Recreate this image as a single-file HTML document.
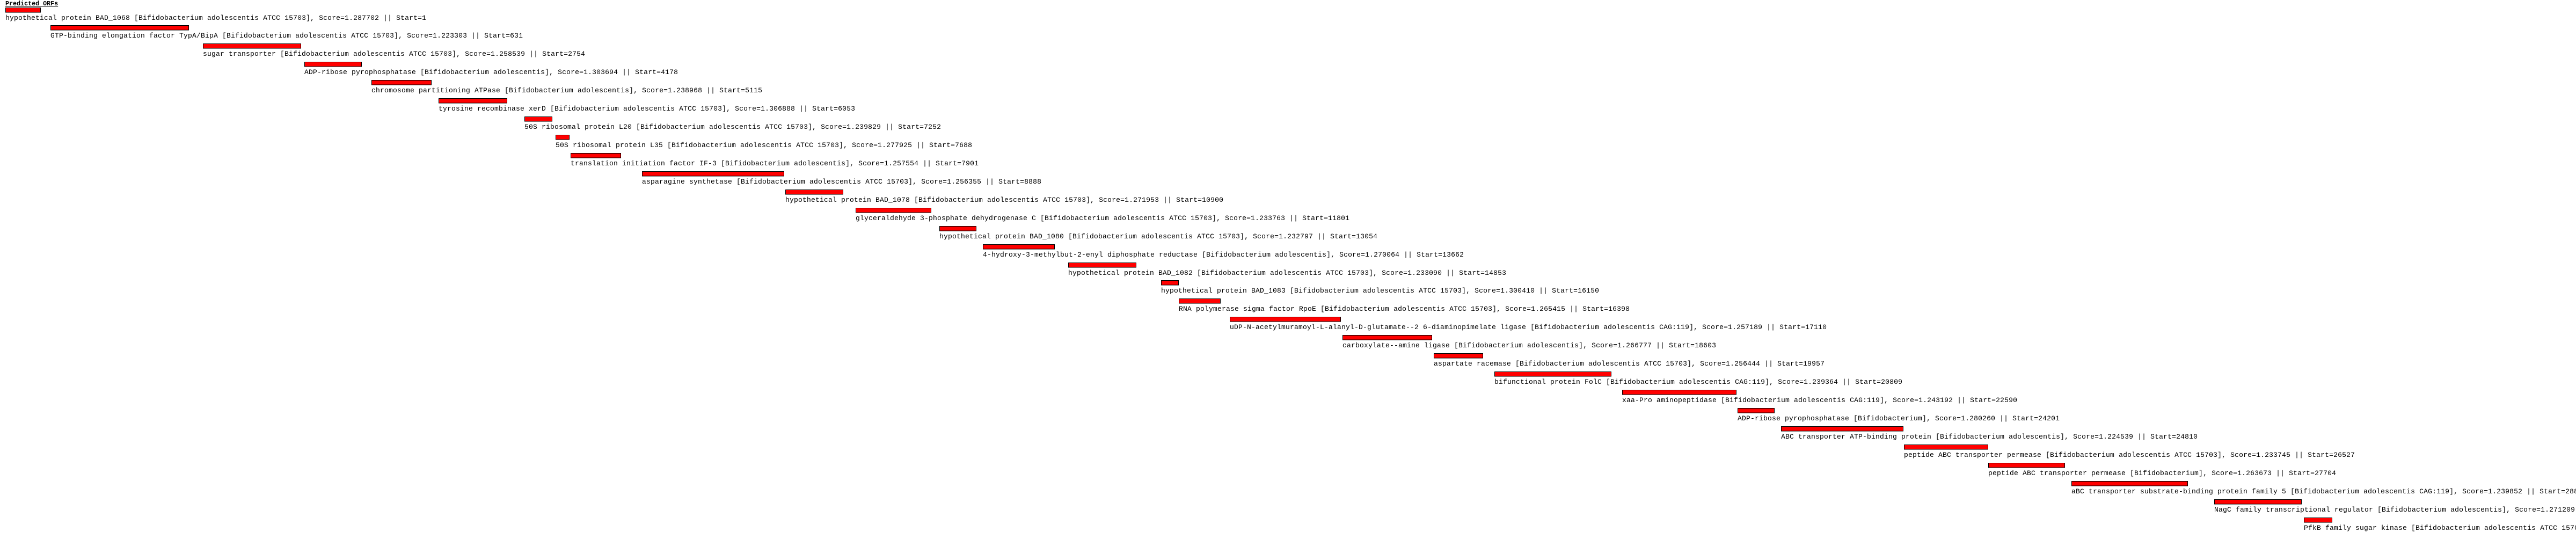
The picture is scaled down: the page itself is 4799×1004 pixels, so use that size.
<!DOCTYPE html>
<html><head><meta charset="utf-8"><style>
html,body{margin:0;padding:0;background:#fff;}
body{width:4799px;height:999px;overflow:hidden;}
svg text{font-family:"Liberation Mono",monospace;}
</style></head><body>
<svg width="4799" height="999" xmlns="http://www.w3.org/2000/svg">
<text x="10" y="10" font-size="11.7" font-weight="bold" text-decoration="underline">Predicted ORFs</text>
<g id="rows" fill="#ff0000" stroke="#000" stroke-width="1"></g>
</svg>
<script>
var rows=[
[10,76,"hypothetical protein BAD_1068 [Bifidobacterium adolescentis ATCC 15703], Score=1.287702 || Start=1"],
[94,352,"GTP-binding elongation factor TypA/BipA [Bifidobacterium adolescentis ATCC 15703], Score=1.223303 || Start=631"],
[378,561,"sugar transporter [Bifidobacterium adolescentis ATCC 15703], Score=1.258539 || Start=2754"],
[567,674,"ADP-ribose pyrophosphatase [Bifidobacterium adolescentis], Score=1.303694 || Start=4178"],
[692,804,"chromosome partitioning ATPase [Bifidobacterium adolescentis], Score=1.238968 || Start=5115"],
[817,945,"tyrosine recombinase xerD [Bifidobacterium adolescentis ATCC 15703], Score=1.306888 || Start=6053"],
[977,1029,"50S ribosomal protein L20 [Bifidobacterium adolescentis ATCC 15703], Score=1.239829 || Start=7252"],
[1035,1061,"50S ribosomal protein L35 [Bifidobacterium adolescentis ATCC 15703], Score=1.277925 || Start=7688"],
[1063,1157,"translation initiation factor IF-3 [Bifidobacterium adolescentis], Score=1.257554 || Start=7901"],
[1196,1461,"asparagine synthetase [Bifidobacterium adolescentis ATCC 15703], Score=1.256355 || Start=8888"],
[1463,1571,"hypothetical protein BAD_1078 [Bifidobacterium adolescentis ATCC 15703], Score=1.271953 || Start=10900"],
[1594,1735,"glyceraldehyde 3-phosphate dehydrogenase C [Bifidobacterium adolescentis ATCC 15703], Score=1.233763 || Start=11801"],
[1750,1819,"hypothetical protein BAD_1080 [Bifidobacterium adolescentis ATCC 15703], Score=1.232797 || Start=13054"],
[1831,1965,"4-hydroxy-3-methylbut-2-enyl diphosphate reductase [Bifidobacterium adolescentis], Score=1.270064 || Start=13662"],
[1990,2117,"hypothetical protein BAD_1082 [Bifidobacterium adolescentis ATCC 15703], Score=1.233090 || Start=14853"],
[2163,2196,"hypothetical protein BAD_1083 [Bifidobacterium adolescentis ATCC 15703], Score=1.300410 || Start=16150"],
[2196,2274,"RNA polymerase sigma factor RpoE [Bifidobacterium adolescentis ATCC 15703], Score=1.265415 || Start=16398"],
[2291,2498,"uDP-N-acetylmuramoyl-L-alanyl-D-glutamate--2 6-diaminopimelate ligase [Bifidobacterium adolescentis CAG:119], Score=1.257189 || Start=17110"],
[2501,2668,"carboxylate--amine ligase [Bifidobacterium adolescentis], Score=1.266777 || Start=18603"],
[2671,2763,"aspartate racemase [Bifidobacterium adolescentis ATCC 15703], Score=1.256444 || Start=19957"],
[2784,3002,"bifunctional protein FolC [Bifidobacterium adolescentis CAG:119], Score=1.239364 || Start=20809"],
[3022,3235,"xaa-Pro aminopeptidase [Bifidobacterium adolescentis CAG:119], Score=1.243192 || Start=22590"],
[3237,3306,"ADP-ribose pyrophosphatase [Bifidobacterium], Score=1.280260 || Start=24201"],
[3318,3546,"ABC transporter ATP-binding protein [Bifidobacterium adolescentis], Score=1.224539 || Start=24810"],
[3547,3704,"peptide ABC transporter permease [Bifidobacterium adolescentis ATCC 15703], Score=1.233745 || Start=26527"],
[3704,3847,"peptide ABC transporter permease [Bifidobacterium], Score=1.263673 || Start=27704"],
[3859,4076,"aBC transporter substrate-binding protein family 5 [Bifidobacterium adolescentis CAG:119], Score=1.239852 || Start=28800"],
[4125,4288,"NagC family transcriptional regulator [Bifidobacterium adolescentis], Score=1.271209 || Start=29960"],
[4292,4345,"PfkB family sugar kinase [Bifidobacterium adolescentis ATCC 15703], Score=1.250000 || Start=30890"]
];
var g=document.getElementById('rows'),ns="http://www.w3.org/2000/svg";
rows.forEach(function(r,i){
 var top=Math.round(13.5+33.93*i);
 var rc=document.createElementNS(ns,'rect');
 rc.setAttribute('x',r[0]+0.5);rc.setAttribute('y',top+0.5);
 rc.setAttribute('width',r[1]-r[0]-1);rc.setAttribute('height',8.5);
 g.appendChild(rc);
 var t=document.createElementNS(ns,'text');
 t.setAttribute('x',r[0]);t.setAttribute('y',top+23);
 t.setAttribute('font-size','13');t.setAttribute('letter-spacing','0.2');
 t.setAttribute('fill','#000');t.setAttribute('stroke','none');
 t.textContent=r[2];
 g.parentNode.appendChild(t);
});
</script>
</body></html>
